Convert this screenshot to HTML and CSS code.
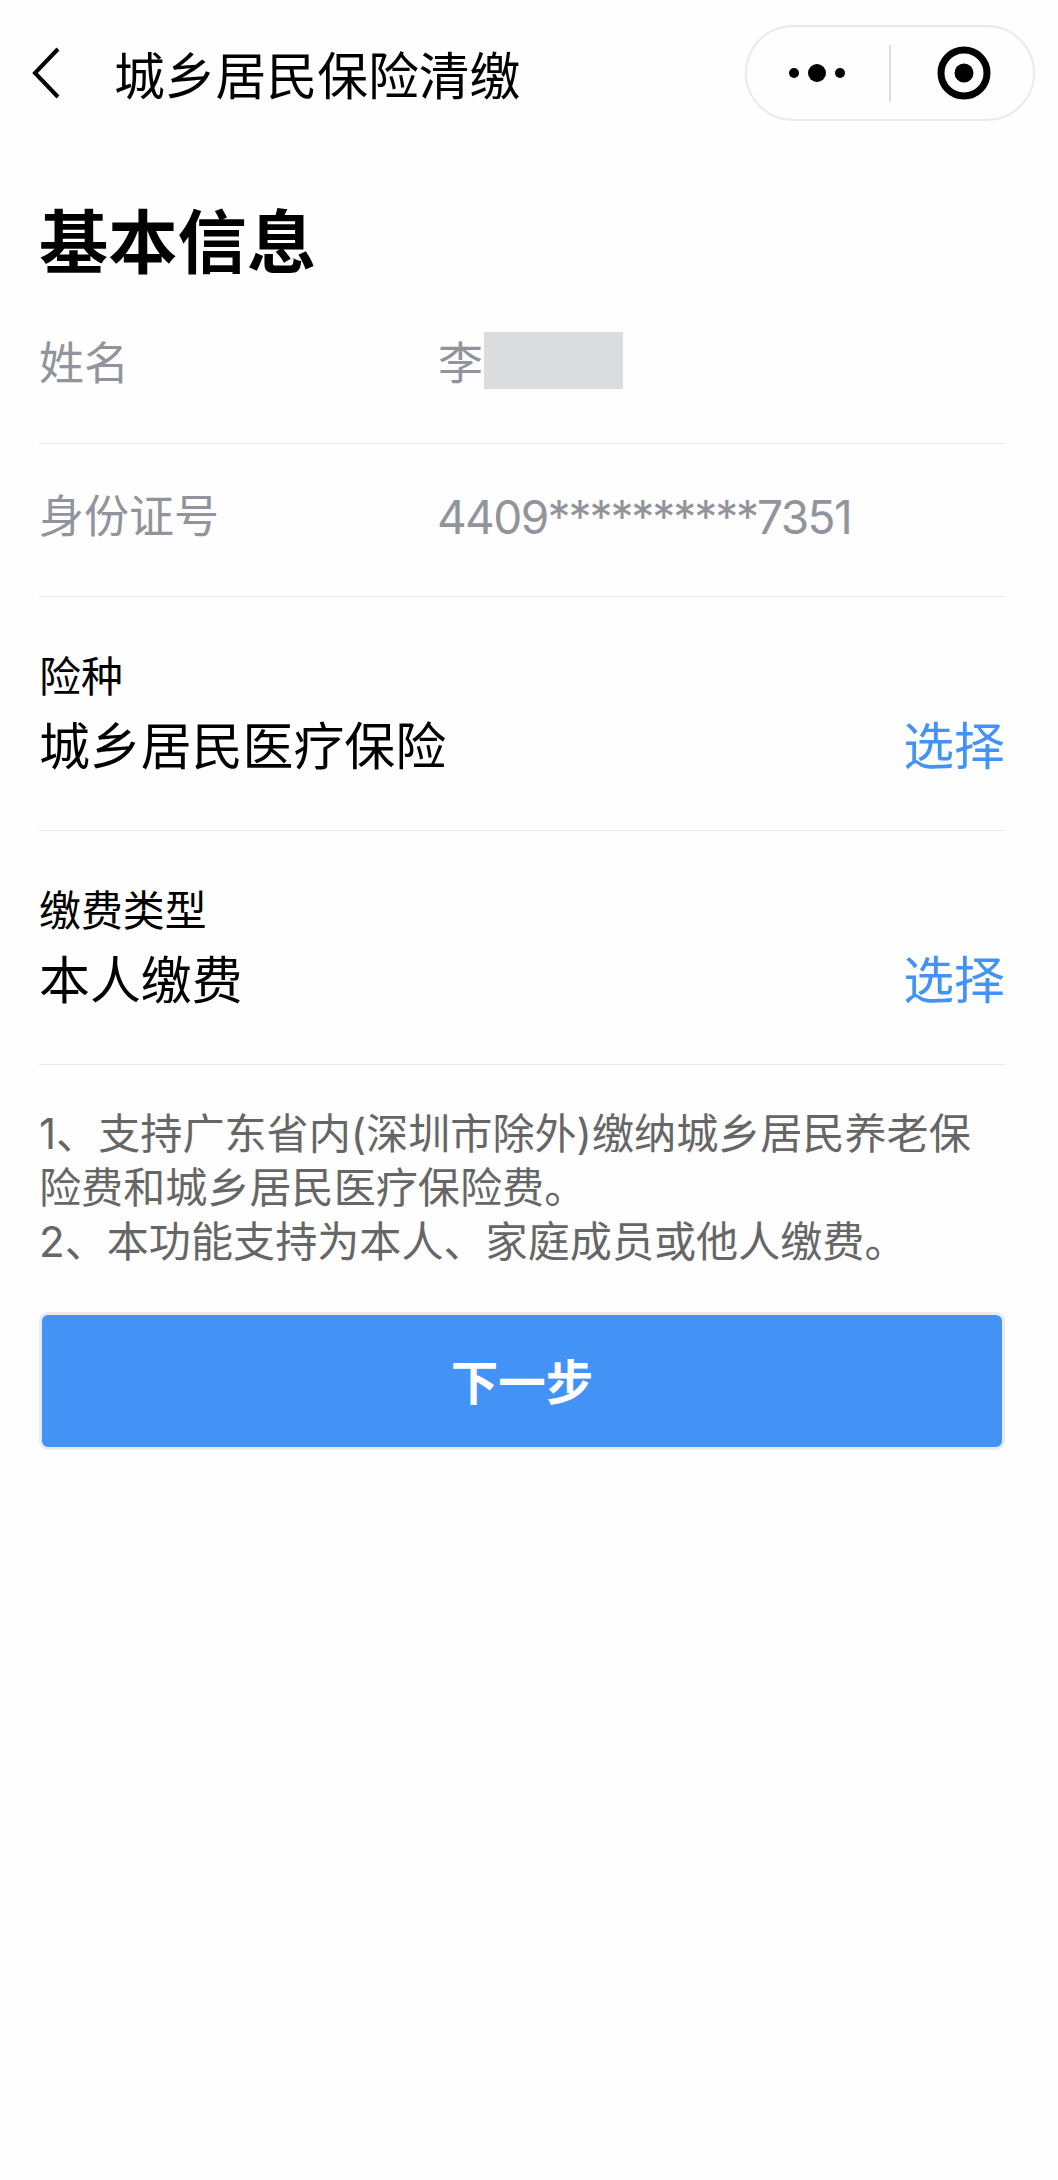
FILE: index.html
```html
<!DOCTYPE html>
<html lang="zh-CN">
<head>
    <meta charset="UTF-8">
    <meta name="viewport" content="width=device-width, initial-scale=1.0">
    <title>城乡居民保险清缴</title>
    <link rel="stylesheet" href="styles.css">
</head>
<body>

    <header class="navbar">
        <svg class="back" viewBox="0 0 30 54" width="30" height="54">
            <path d="M26 3 L3 27 L26 51" fill="none" stroke="#000" stroke-width="4"/>
        </svg>
        <div class="nav-title">城乡居民保险清缴</div>
        <div class="capsule">
            <svg class="more" viewBox="0 0 58 20" width="58" height="20">
                <circle cx="6" cy="10" r="5"/>
                <circle cx="29" cy="10" r="9"/>
                <circle cx="52" cy="10" r="5"/>
            </svg>
            <span class="capsule-line"></span>
            <svg class="close" viewBox="0 0 54 54" width="54" height="54">
                <circle cx="27" cy="27" r="23" fill="none" stroke="#000" stroke-width="7"/>
                <circle cx="27" cy="27" r="9.5"/>
            </svg>
        </div>
    </header>

    <main class="content">
        <h1>基本信息</h1>

        <div class="info-row">
            <span class="info-label">姓名</span>
            <span class="info-value">李<span class="mask"></span></span>
        </div>
        <div class="info-row">
            <span class="info-label">身份证号</span>
            <span class="info-value id-number">4409<span class="stars">**********</span>7351</span>
        </div>

        <div class="select-row">
            <div class="select-label">险种</div>
            <div class="select-line">
                <span>城乡居民医疗保险</span>
                <a class="select-link">选择</a>
            </div>
        </div>
        <div class="select-row">
            <div class="select-label">缴费类型</div>
            <div class="select-line">
                <span>本人缴费</span>
                <a class="select-link">选择</a>
            </div>
        </div>

        <p class="tips">1、支持广东省内(深圳市除外)缴纳城乡居民养老保<br>险费和城乡居民医疗保险费。<br>2、本功能支持为本人、家庭成员或他人缴费。</p>

        <button class="next-btn">下一步</button>
    </main>

</body>
</html>
```
FILE: styles.css
```css
* {
    box-sizing: border-box;
}

body {
    margin: 0;
    min-height: 2180px;
    background: #fefefe;
    color: #000;
    font-family: Inter, "Noto Sans CJK SC", sans-serif;
}

.navbar {
    display: flex;
    align-items: center;
    height: 146px;
    padding: 0 23px 0 32px;
}

.back {
    display: block;
}

.nav-title {
    margin: 7px 0 0 52px;
    font-size: 50.8px;
    line-height: 60px;
}

.capsule {
    display: flex;
    align-items: center;
    width: 290px;
    height: 96px;
    margin-left: auto;
    padding-left: 41px;
    border: 2px solid #eaeaea;
    border-radius: 48px;
}

.capsule-line {
    width: 2px;
    height: 57px;
    margin: 0 46px 0 43px;
    background: #dedede;
}

.content {
    padding: 49px 53px 0 39px;
}

h1 {
    margin: 0 0 -1px;
    font-size: 69.3px;
    line-height: 97px;
    font-weight: bold;
}

.info-row {
    display: flex;
    align-items: flex-start;
    height: 153px;
    padding-top: 46px;
    border-bottom: 1px solid #e8e8e8;
    color: #91949b;
    font-size: 45px;
    line-height: 54px;
}

.info-label {
    width: 399px;
}

.info-value {
    display: flex;
    align-items: center;
    height: 54px;
}

.mask {
    width: 139px;
    height: 57px;
    margin: -7px 0 0 1px;
    background: #dbdcde;
}

.id-number {
    margin-left: -1px;
    font-size: 46px;
    letter-spacing: -1.6px;
}

.stars {
    letter-spacing: -2.1px;
}

.select-row {
    height: 234px;
    padding-top: 50px;
    border-bottom: 1px solid #e8e8e8;
}

.select-label {
    margin-bottom: 10px;
    font-size: 41.9px;
    line-height: 60px;
}

.select-line {
    display: flex;
    justify-content: space-between;
    font-size: 50.9px;
    line-height: 60px;
}

.select-link {
    color: #4393f6;
}

.tips {
    margin: 42px 0 43px;
    color: #666;
    font-size: 42.1px;
    line-height: 54px;
    white-space: nowrap;
}

.next-btn {
    display: block;
    width: 100%;
    height: 138px;
    padding: 0 0 3px;
    border: 3px solid #ebebeb;
    border-radius: 9px;
    background: #4393f6;
    color: #fff;
    font-family: inherit;
    font-size: 47.5px;
    font-weight: bold;
}
```
